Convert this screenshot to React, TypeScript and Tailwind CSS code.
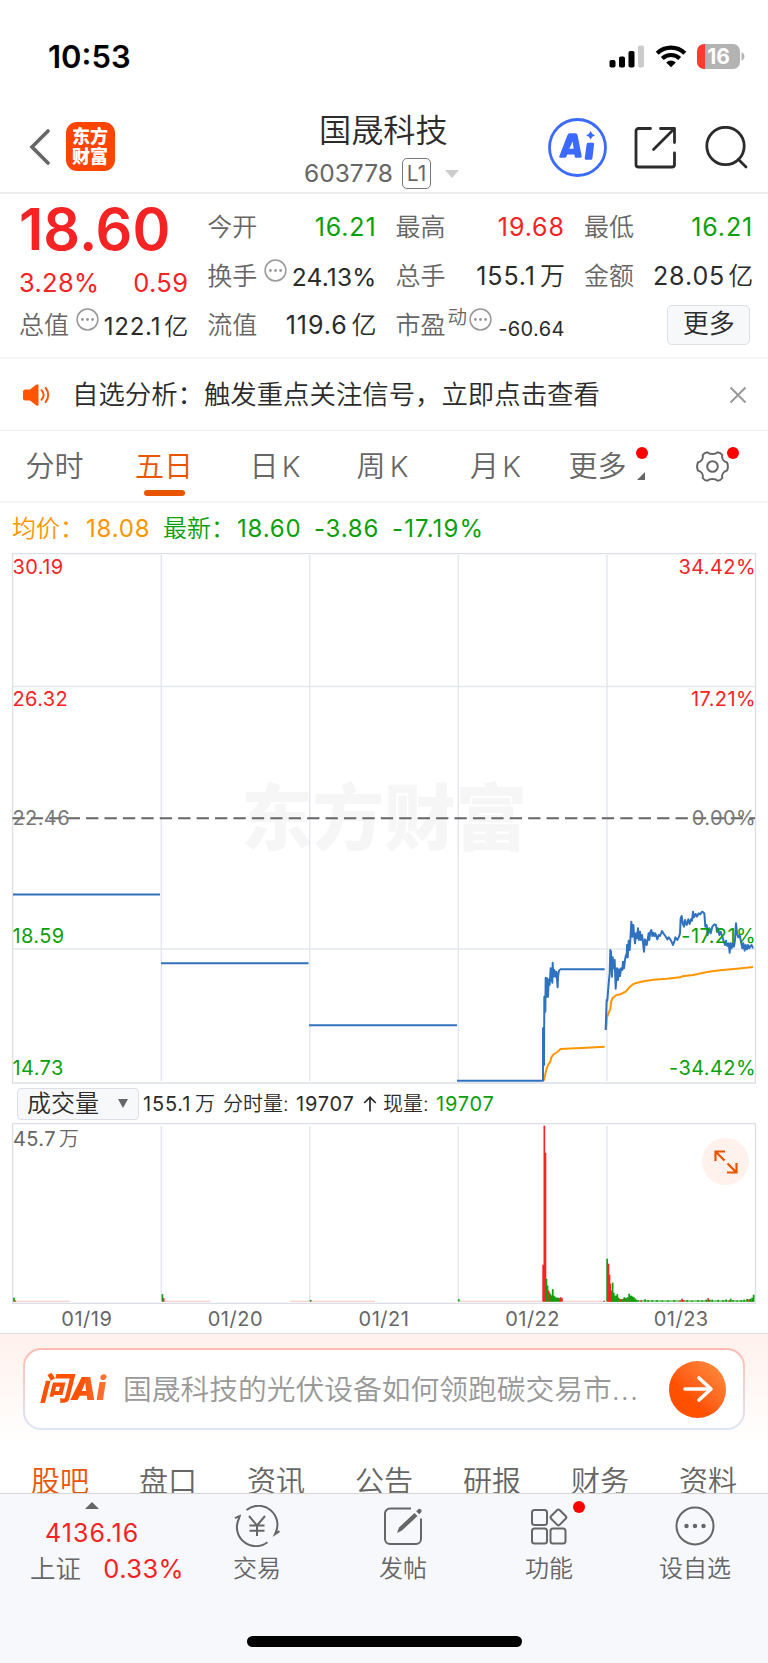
import type { ReactNode } from "react";

type Tone = "up" | "down" | "plain";

const toneClass: Record<Tone, string> = {
  up: "text-[#f52323]",
  down: "text-[#0aa00a]",
  plain: "text-[#2b2b2b]",
};

const sectionTabs = ["股吧", "盘口", "资讯", "公告", "研报", "财务", "资料"];
const dates = ["01/19", "01/20", "01/21", "01/22", "01/23"];

// points on a 3x grid whose origin is the left of the last two sessions
const priceDay4 =
  "-189,602 69,602 69,445 72,555 73,350 76,395 77,293 80,350 82,295 84,350 86,300 89,315 92,265 94,290 97,308 98,248 100,290 103,270 106,290 109,275 113,322 114,290 117,272 121,268 254,268";
const priceDay5 =
  "257,450 260,360 262,362 266,310 269,280 271,210 273,215 276,290 278,232 281,265 284,240 287,326 291,265 294,300 297,268 300,288 303,265 307,270 309,245 312,265 315,240 318,225 320,232 321,195 323,232 326,182 329,210 331,180 334,125 337,170 340,135 342,160 345,190 348,160 351,175 354,145 357,180 360,155 363,180 366,165 368,178 372,215 375,178 378,185 380,195 383,178 386,160 388,180 391,155 394,150 397,168 400,158 403,168 406,160 412,178 416,165 420,168 426,153 430,160 436,168 442,178 446,172 451,178 456,188 459,195 463,185 466,172 472,180 477,170 480,160 482,115 485,108 488,130 492,140 495,120 500,135 505,118 509,132 513,118 516,122 519,95 522,112 527,102 531,110 536,100 541,103 546,95 550,97 553,100 556,140 560,135 563,165 568,145 572,160 577,140 583,133 588,135 591,155 594,145 598,165 602,155 606,168 610,180 615,195 618,182 622,198 626,190 629,218 632,190 635,205 638,190 642,200 645,180 648,130 651,160 655,172 659,165 663,185 667,205 670,190 674,212 677,195 681,208 684,195 688,205 691,198 695,195 699,205";
const avgDay4 =
  "72,602 76,582 81,562 86,552 91,545 94,532 102,522 112,516 122,507 135,506 200,503 254,500";
const avgDay5 =
  "258,450 261,412 266,398 271,388 273,366 278,354 286,347 303,342 318,334 328,322 340,312 352,308 375,303 400,299 440,296 480,292 487,289 520,285 565,275 600,271 650,266 699,261";

// [x, height, 1 = up / 0 = down]
const volumeBars: [number, number, number][] = [
  [13.8, 4, 0], [15, 1.2, 1], [162.3, 7.5, 0], [163.5, 3.5, 1], [310.5, 1.8, 0], [458.6, 2.5, 0],
  [543, 37, 1], [544.2, 176, 1], [545.3, 149, 1], [546.3, 23, 0], [547.4, 16, 0], [548.5, 11, 1],
  [549.3, 9, 0], [550.4, 7.5, 0], [551.5, 6, 1], [552.6, 12.5, 0], [553.7, 6, 0], [554.8, 5, 0],
  [556, 4, 0], [557.1, 4, 0], [558.3, 4, 0], [559.5, 3.5, 1], [560.6, 4.5, 1], [561.8, 3.5, 1],
  [604, 1, 1], [607, 43, 0], [608.3, 38, 1], [609.3, 27, 1], [610.2, 18, 1], [611.2, 11, 1],
  [612.5, 19, 0], [613.6, 9, 0], [614.8, 6, 0], [616, 6, 0], [617.2, 7.5, 0], [618.3, 4, 0],
  [619.5, 3, 0], [620.7, 2.5, 1], [621.8, 2.5, 0], [623, 3, 0], [624.2, 4.5, 0], [625.4, 3.5, 1],
  [626.6, 4, 0], [627.8, 4.5, 1], [629, 8, 0], [630.2, 6, 0], [631.4, 6, 0], [632.6, 5, 0],
  [633.8, 4.5, 0], [635, 3, 0], [636.2, 2, 0], [638, 1.5, 0], [641, 1.5, 1], [645, 2.5, 0],
  [648, 1.5, 0], [652, 1.5, 0], [657, 1.5, 0], [662, 1.2, 0], [668, 1.2, 0], [674, 1.5, 0],
  [680, 1.2, 1], [682, 3, 1], [683.5, 1.5, 1], [687, 1.5, 0], [692, 1, 0], [698, 1.5, 0],
  [702, 1.2, 0], [706, 2, 0], [708, 3.5, 1], [709.5, 2, 0], [712, 2, 0], [718, 1.8, 0],
  [723, 1.5, 0], [726, 2.2, 0], [729, 1.2, 1], [730.5, 3, 0], [733, 1.5, 0], [737, 1.2, 0],
  [741, 1.5, 0], [744, 2, 0], [747, 2.8, 0], [749, 2.5, 1], [750.5, 3, 0], [752, 4, 0], [753.5, 7, 0],
];

const Bubble = () => (
  <svg className="size-[23px] shrink-0" viewBox="0 0 23 23" fill="none">
    <circle cx="11.5" cy="11.5" r="10.4" stroke="#999" strokeWidth="1.5" />
    <circle cx="6.4" cy="11.5" r="1.4" fill="#999" />
    <circle cx="11.5" cy="11.5" r="1.4" fill="#999" />
    <circle cx="16.6" cy="11.5" r="1.4" fill="#999" />
  </svg>
);

const Cell = ({
  label,
  tone = "plain",
  children,
}: {
  label: string;
  tone?: Tone;
  children: ReactNode;
}) => (
  <div className="flex items-center justify-between">
    <span className="text-[25px] font-[350] text-[#666]">{label}</span>
    <span className={`-mr-px flex items-center text-[25px] tracking-[0.9px] ${toneClass[tone]}`}>{children}</span>
  </div>
);

const StatusBar = () => (
  <div className="flex h-[105px] justify-between pl-[48px] pr-[23px]">
    <span className="mt-[41px] text-[31px] font-semibold text-black">10:53</span>
    <div className="mt-[43px] flex h-[26px] items-center">
      <svg className="h-[24px] w-[36px]" viewBox="0 0 36 24">
        <rect x="0.5" y="16" width="6" height="7.5" rx="1.8" />
        <rect x="10" y="12.5" width="6" height="11" rx="1.8" />
        <rect x="19.5" y="7" width="6" height="16.5" rx="1.8" />
        <rect x="29" y="1.5" width="6" height="22" rx="1.8" fill="#ccc" />
      </svg>
      <svg className="ml-[10px] h-[24px] w-[32px]" viewBox="0 0 32 24" fill="none" stroke="#000">
        <path d="M2.2 9.2a20 20 0 0 1 27.6 0" strokeWidth="4.3" />
        <path d="M7.3 14.5a12.6 12.6 0 0 1 17.4 0" strokeWidth="4.1" />
        <path d="M16 23.3l-4.8-4.9a7 7 0 0 1 9.6 0z" fill="#000" stroke="none" />
      </svg>
      <div className="ml-[10px] flex h-[25px] w-[43px] items-center justify-center overflow-hidden rounded-[7px] bg-[linear-gradient(90deg,#ff3b30_7.5px,#b3b3b3_7.5px)]">
        <span className="pt-px text-[21px] font-bold text-white">16</span>
      </div>
      <svg className="ml-px h-[9px] w-[4px]" viewBox="0 0 4 9">
        <path d="M0.5 0.3C4.4 1.6 4.4 7.4 0.5 8.7z" fill="#b3b3b3" />
      </svg>
    </div>
  </div>
);

const Header = () => (
  <header className="relative flex h-[89px] items-start justify-between border-b-2 border-[#ececec] pl-[29px] pr-[20px]">
    <div className="flex items-center pt-[17px]">
      <svg className="h-[38px] w-[22px]" viewBox="0 0 22 38" fill="none">
        <path d="M19 3L3 19l16 16" stroke="#666" strokeWidth="3.6" strokeLinecap="round" />
      </svg>
      <div className="ml-[14.5px] grid size-[49px] grid-cols-1 place-content-center rounded-[11px] bg-[#ff4400] text-center text-[18px] font-black leading-[20px] text-white">
        <span>东方</span>
        <span>财富</span>
      </div>
    </div>
    <div className="absolute left-[304px] top-[10px] flex flex-col">
      <h1 className="pl-[15px] text-[32.2px] font-[350] text-[#2b2b2b]">国晟科技</h1>
      <div className="mt-[11px] flex items-center">
        <span className="w-[98px] text-[24.5px] text-[#666]">603778</span>
        <span className="flex h-[31px] w-[29px] items-center justify-center rounded-[5px] border border-[#777] text-[21px] text-[#666]">
          L1
        </span>
        <svg className="ml-[14px] h-[8px] w-[14px]" viewBox="0 0 14 8">
          <path d="M0 0h14L7 8z" fill="#ccc" />
        </svg>
      </div>
    </div>
    <div className="flex items-center pt-[13px]">
      <svg className="size-[59px]" viewBox="0 0 59 59" fill="none">
        <circle cx="29.5" cy="29.5" r="28" stroke="#3a6aff" strokeWidth="2.8" />
        <path
          d="M11.300 38.200L19.500 17q.6-1.800 2.500-1.800h5.500q1.700 0 2 1.800L33.700 38q.3 1.800-1.500 1.800h-4q-1.300 0-1.500-1.300l-.3-2h-7.200l-.8 2q-.5 1.300-1.800 1.300h-4q-1.900 0-1.300-1.600zM21.300 30.800h4.300l-.9-7.300z"
          fill="#3a6aff"
          fillRule="evenodd"
        />
        <path
          d="M38.700 26q.2-1.300 1.500-1.300h4.600q1.500 0 1.300 1.500l-1.700 14.100q-.2 1.500-1.500 1.500h-4.800q-1.600 0-1.400-1.500zM42.600 13q1.200 3.400 4.500 4.300-3.300 1-4.500 4.300-1.200-3.300-4.500-4.300 3.300-.9 4.500-4.300z"
          fill="#3a6aff"
        />
      </svg>
      <svg className="ml-[27px] size-[43px]" viewBox="0 0 43 43" fill="none" stroke="#2b2b2b" strokeWidth="2.8" strokeLinecap="round" strokeLinejoin="round">
        <path d="M16.500 2.500H4.500a2.500 2.500 0 0 0-2.500 2.500V38.500a2.500 2.500 0 0 0 2.500 2.500H38a2.500 2.500 0 0 0 2.500-2.500V27" />
        <path d="M26.500 2.500H40.500V16.500M40 3L19.500 23.500" />
      </svg>
      <svg className="ml-[27px] size-[44px]" viewBox="0 0 44 44" fill="none" stroke="#2b2b2b" strokeWidth="2.8" strokeLinecap="round">
        <circle cx="21.500" cy="20" r="18.700" />
        <path d="M34.500 33.500l7.500 7.500" />
      </svg>
    </div>
  </header>
);

const Quote = () => (
  <section className="grid h-[165px] grid-cols-[168.300px_168.300px_168.300px_168.300px] grid-rows-[49px_49px_49px] gap-x-5 border-b-2 border-[#f6f6f6] pl-[19px] pt-[9px]">
    <div className="flex items-center pt-[4px] text-[57.500px] font-semibold text-[#f52323]">18.60</div>
    <Cell label="今开" tone="down">16.21</Cell>
    <Cell label="最高" tone="up">19.68</Cell>
    <Cell label="最低" tone="down">16.21</Cell>

    <div className="flex items-center justify-between pt-[13px] text-[25.500px] tracking-[0.3px] text-[#f52323]">
      <span>3.28%</span>
      <span className="-mr-px">0.59</span>
    </div>
    <div className="flex items-center">
      <span className="w-[57px] text-[25px] font-[350] text-[#666]">换手</span>
      <span className="mb-[12px]"><Bubble /></span>
      <span className="-mr-px ml-auto pt-[2px] text-[24.500px] tracking-[0.2px] text-[#2b2b2b]">24.13%</span>
    </div>
    <Cell label="总手">155.1<span className="ml-1 font-[350] tracking-normal">万</span></Cell>
    <Cell label="金额">28.05<span className="ml-[3px] font-[350] tracking-normal">亿</span></Cell>

    <div className="flex items-center">
      <span className="w-[57px] text-[25px] font-[350] text-[#666]">总值</span>
      <span className="mb-[12px]"><Bubble /></span>
      <span className="-mr-px ml-auto flex pt-[3px] text-[24px] tracking-[0.8px] text-[#2b2b2b]">122.1<span className="ml-[3px] font-[350] tracking-normal">亿</span></span>
    </div>
    <Cell label="流值">119.6<span className="ml-1 font-[350] tracking-normal">亿</span></Cell>
    <div className="flex items-center">
      <span className="text-[25px] font-[350] text-[#666]">市盈</span>
      <span className="mb-[15px] ml-[2px] text-[19.500px] font-[350] text-[#666]">动</span>
      <span className="mb-[12px] ml-[2px]"><Bubble /></span>
      <span className="-mr-px ml-auto pt-[6px] text-[20px] tracking-[0.400px] text-[#2b2b2b]">-60.64</span>
    </div>
    <div className="flex items-center justify-end pb-[2px] pr-[2px]">
      <button className="flex h-[40px] w-[83px] items-center justify-center rounded-[5px] border border-[#dcdfe6] bg-[#f7f8fa] pb-px text-[26px] font-[350] text-[#2b2b2b]">
        更多
      </button>
    </div>
  </section>
);

const Notice = () => (
  <section className="flex h-[72px] items-center border-b border-[#f0f0f0] pl-[22px] pr-[21px]">
    <svg className="h-[22px] w-[28px]" viewBox="0 0 28 22" fill="none">
      <path d="M1 8q0-2.500 2.500-2.500h4.500L14 .7q2.500-1.500 2.500 1v18.600q0 2.500-2.500 1l-6-4.800H3.500Q1 16.500 1 14z" fill="#ff5500" />
      <path d="M19.500 6.200a6.500 6.500 0 0 1 0 9.600M23.700 4a11 11 0 0 1 0 14" stroke="#ff5500" strokeWidth="2" strokeLinecap="round" />
    </svg>
    <p className="ml-[22px] whitespace-nowrap text-[26.400px] font-[350] text-[#2b2b2b]">
      自选分析：触发重点关注信号，立即点击查看
    </p>
    <svg className="ml-auto size-[18px]" viewBox="0 0 18 18" stroke="#999" strokeWidth="2">
      <path d="M1.500 1.500l15 15M16.500 1.500l-15 15" />
    </svg>
  </section>
);

const PeriodTabs = () => (
  <nav className="grid h-[72px] grid-cols-[109px_110px_112px_103px_123px_81px_130px] items-center border-b-2 border-[#f5f5f5] text-center text-[29px] font-[350] text-[#666]">
    <span>分时</span>
    <span className="relative text-[#ea5504]">
      五日
      <i className="absolute -bottom-[15px] left-[35px] h-[6px] w-[41px] rounded-full bg-[#ea5504]" />
    </span>
    <span>日<span className="ml-[3px]">K</span></span>
    <span>周<span className="ml-1">K</span></span>
    <span>月<span className="ml-[3px]">K</span></span>
    <span className="relative">
      更多
      <i className="absolute -top-[5px] right-[-10px] size-[12px] rounded-full bg-[#ff0000]" />
      <svg className="absolute right-[-7px] top-[20px] size-[8px]" viewBox="0 0 8 8">
        <path d="M8 0v8H0z" fill="#666" />
      </svg>
    </span>
    <span className="relative flex pl-[58px]">
      <svg className="size-[33px]" viewBox="0 0 33 33" fill="none" stroke="#666" strokeWidth="2">
        <path
          d="M11.500 2.300C13.600 4.600 19.400 4.600 21.500 2.300Q24.500 2.500 26.300 5C25.600 8.400 27.600 11.600 31 12.500Q32.800 16.500 31 20.500C27.600 21.400 25.600 24.600 26.300 28Q24.500 30.500 21.500 30.700C19.400 28.400 13.600 28.400 11.500 30.700Q8.500 30.500 6.700 28C7.400 24.600 5.400 21.400 2 20.500Q.2 16.500 2 12.500C5.400 11.600 7.400 8.400 6.700 5Q8.500 2.500 11.500 2.300z"
          strokeLinejoin="round"
        />
        <circle cx="16.500" cy="16.500" r="5.300" />
      </svg>
      <i className="absolute left-[89px] top-[-3px] size-[12px] rounded-full bg-[#ff0000]" />
    </span>
  </nav>
);

const PriceChart = () => (
  <section className="relative h-[531px] text-[20px] tracking-[0.400px]">
    <span className="absolute left-[241px] top-[230px] text-[71.500px] font-black tracking-normal text-[#f6f6f6]">东方财富</span>
    <svg className="absolute inset-0 h-[531px] w-[768px]" viewBox="0 553 768 531" fill="none">
      <path d="M161.300 555V1081M309.700 555V1081M458.300 555V1081M607 555V1081M13 686.500H755M13 949H755" stroke="#e4e7ee" strokeWidth="1.500" />
      <path d="M12.600 1083V553.500H755.500V1083z" stroke="#dcdfe6" strokeWidth="1.300" />
      <path d="M12.400 818.300H755" stroke="#666" strokeWidth="2" strokeDasharray="12.300 6.120" />
      <path d="M13 894.500H160M161 963.200H308.500M309 1025.200H457" stroke="#2f72c0" strokeWidth="2" />
      <g transform="translate(520 880) scale(0.33333)" strokeWidth="6" strokeLinejoin="round">
        <polyline points={avgDay4} stroke="#ff9500" />
        <polyline points={avgDay5} stroke="#ff9500" />
        <polyline points={priceDay4} stroke="#2f72c0" />
        <polyline points={priceDay5} stroke="#2f72c0" />
      </g>
    </svg>
    <div className="absolute left-[12.500px] top-[4px] text-[#f52323]">30.19</div>
    <div className="absolute left-[12.500px] top-[136px] text-[#f52323]">26.32</div>
    <div className="absolute left-[12.500px] top-[255px] text-[#777]">22.46</div>
    <div className="absolute left-[12.500px] top-[373px] text-[#0aa00a]">18.59</div>
    <div className="absolute left-[12.500px] top-[505px] text-[#0aa00a]">14.73</div>
    <div className="absolute right-[12px] top-[4px] text-[#f52323]">34.42%</div>
    <div className="absolute right-[12px] top-[136px] text-[#f52323]">17.21%</div>
    <div className="absolute right-[12px] top-[255px] text-[#777]">0.00%</div>
    <div className="absolute right-[12px] top-[373px] text-[#0aa00a]">-17.21%</div>
    <div className="absolute right-[12px] top-[505px] text-[#0aa00a]">-34.42%</div>
  </section>
);

const VolumeChart = () => (
  <>
    <div className="flex h-[39px] items-center pl-[17px] text-[20px] text-[#2b2b2b]">
      <button className="flex h-[32px] w-[122px] items-center justify-between rounded-[4px] border border-[#dcdfe6] bg-[#f7f8fa] pl-[9px] pr-[10px] text-[24px] font-[350]">
        成交量
        <svg className="h-[9px] w-[10px]" viewBox="0 0 10 9">
          <path d="M0 0h10L5 9z" fill="#666" />
        </svg>
      </button>
      <span className="ml-[4px] w-[80px] tracking-[0.800px]">155.1<span className="ml-[4px] font-[350]">万</span></span>
      <span className="w-[73px] font-[350]">分时量:</span>
      <span className="w-[67px] tracking-[0.800px]">19707</span>
      <svg className="h-[16px] w-[14px]" viewBox="0 0 14 16" fill="none" stroke="#2b2b2b" strokeWidth="1.700">
        <path d="M7 15.500V1.500M1.200 7L7 1.300 12.800 7" />
      </svg>
      <span className="ml-[6px] w-[53px] font-[350]">现量:</span>
      <span className="tracking-[0.800px] text-[#0aa00a]">19707</span>
    </div>
    <section className="relative h-[181px]">
      <svg className="h-[181px] w-[768px]" viewBox="0 1123 768 181" fill="none">
        <path d="M161.300 1126V1301M309.700 1126V1301M458.300 1126V1301M607 1126V1301" stroke="#e4e7ee" strokeWidth="1.500" />
        <path d="M12.600 1303.300V1123.600H755.500V1303.300z" stroke="#dcdfe6" strokeWidth="1.300" />
        <path d="M15 1301.300H70M164 1301.300H210M290 1301.300H375M460 1301.300H542M563 1301.300H606" stroke="#f52323" strokeOpacity="0.35" strokeWidth="0.800" />
        <path d="M610 1301H754" stroke="#0aa00a" strokeWidth="1" />
        {volumeBars.map(([x, h, up]) => (
          <rect key={x} x={x - 0.700} y={1301.700 - h} width="1.700" height={h} fill={up ? "#f52323" : "#0aa00a"} />
        ))}
      </svg>
      <span className="absolute left-[13px] top-[6px] text-[20px] tracking-[0.400px] text-[#666]">
        45.7<span className="ml-[3px] font-[350]">万</span>
      </span>
      <div className="absolute left-[702px] top-[15px] flex size-[47px] items-center justify-center rounded-full bg-[#fff1eb]">
        <svg className="size-[24px]" viewBox="0 0 24 24" fill="none" stroke="#ea5504" strokeWidth="2.200">
          <path d="M1.500 11V1.500H11M2 2l8.500 8.500M22.500 13v9.500H13M22 22l-8.500-8.500" />
        </svg>
      </div>
    </section>
    <div className="grid h-[30px] grid-cols-5 items-center border-b border-[#dcdfe6] px-[12.500px] pt-px text-center text-[20px] tracking-[0.500px] text-[#666]">
      {dates.map((date) => (
        <span key={date}>{date}</span>
      ))}
    </div>
  </>
);

const AskBar = () => (
  <section className="h-[112px] bg-linear-to-b from-[#fff1ec] to-white px-[23px] pt-[14px]">
    <div className="h-[82px] rounded-[18px] bg-linear-to-b from-[#ffbcb2] to-[#dde6f8] p-[2px]">
      <div className="flex h-full items-center rounded-[16px] bg-white pl-[14px] pr-[17px]">
        <span className="w-[84px] bg-linear-to-r from-[#ff5000] from-50% to-[#ff8a4a] bg-clip-text text-[32px] font-black italic text-transparent">
          问Ai
        </span>
        <span className="whitespace-nowrap pt-[3px] text-[28.750px] font-[350] text-[#999]">国晟科技的光伏设备如何领跑碳交易市<span className="tracking-[1px]">...</span></span>
        <span className="ml-auto flex size-[57px] items-center justify-center rounded-full bg-linear-to-tr from-[#ff5000] from-35% to-[#ff9040]">
          <svg className="h-[26px] w-[30px]" viewBox="0 0 30 26" fill="none" stroke="#fff" strokeWidth="3.600" strokeLinecap="round" strokeLinejoin="round">
            <path d="M2 13h26M16 2l12 11-12 11" />
          </svg>
        </span>
      </div>
    </div>
  </section>
);

const NavItem = ({ label, children }: { label: string; children: ReactNode }) => (
  <div className="flex w-[146px] flex-col items-center pt-[11px]">
    <div className="flex h-[42px] items-center">{children}</div>
    <span className="mt-[10px] text-[24px] font-[350] text-[#666]">{label}</span>
  </div>
);

const BottomBar = () => (
  <footer className="relative flex h-[170px] border-t border-[#d5d5d8] bg-[#f7f8fb]">
    <div className="w-[184px]">
      <svg className="ml-[85px] mt-[8px] h-[7px] w-[14px]" viewBox="0 0 14 7">
        <path d="M7 0l7 7H0z" fill="#666" />
      </svg>
      <div className="ml-[45px] mt-[12px] text-[25px] tracking-[1.100px] text-[#f52323]">4136.16</div>
      <div className="ml-[30px] mt-[10px] flex text-[25.500px] text-[#f52323]">
        <span className="w-[74px] font-[350] text-[#666]">上证</span>
        <span className="tracking-[0.400px]">0.33%</span>
      </div>
    </div>
    <NavItem label="交易">
      <svg className="h-[42px] w-[46px]" viewBox="0 0 46 42" fill="none" stroke="#666" strokeWidth="2">
        <path d="M12.500 5a19 19 0 0 1 29.300 22.500l-.8 1.700 4.500-3M33.500 37.200A19 19 0 0 1 5 13.500l.7-2.500-4.700 2.200" />
        <path d="M15 11l8 9.500 8-9.500M23 20.500V31M15.500 20.500h15M15.500 25.700h15" />
      </svg>
    </NavItem>
    <NavItem label="发帖">
      <svg className="size-[40px]" viewBox="0 0 40 40" fill="none" stroke="#666" strokeWidth="2">
        <path d="M28 2.500H7a5 5 0 0 0-5 5V33a5 5 0 0 0 5 5H33a5 5 0 0 0 5-5V12.500" />
        <path d="M14 27l2-5.500L31.500 7l3 3L19 24.500zM33.200 5.300l2-2q1.500-1 2.700.2t.3 2.700l-2 2z" fill="#666" stroke="none" />
      </svg>
    </NavItem>
    <NavItem label="功能">
      <span className="relative flex">
        <svg className="size-[38px]" viewBox="0 0 38 38" fill="none" stroke="#666" strokeWidth="2">
          <rect x="2" y="3" width="15" height="15" rx="2.500" />
          <rect x="2" y="21.500" width="15" height="15" rx="2.500" />
          <rect x="20.500" y="21.500" width="15" height="15" rx="2.500" />
          <rect x="22.300" y="4.300" width="12.200" height="12.200" rx="2" transform="rotate(45 28.400 10.400)" />
        </svg>
        <i className="absolute -right-[17px] -top-[6px] size-[12px] rounded-full bg-[#ff0000]" />
      </span>
    </NavItem>
    <NavItem label="设自选">
      <svg className="size-[40px]" viewBox="0 0 40 40" fill="none">
        <circle cx="20" cy="20" r="18.500" stroke="#666" strokeWidth="2" />
        <circle cx="11.500" cy="20" r="2.200" fill="#666" />
        <circle cx="20" cy="20" r="2.200" fill="#666" />
        <circle cx="28.500" cy="20" r="2.200" fill="#666" />
      </svg>
    </NavItem>
    <div className="absolute left-[247px] top-[142px] h-[11px] w-[275px] rounded-full bg-black" />
  </footer>
);

const App = () => (
  <div className="h-[1663px] w-[768px] overflow-hidden bg-white font-['Inter','Noto_Sans_CJK_SC',sans-serif] leading-none">
    <StatusBar />
    <Header />
    <Quote />
    <Notice />
    <PeriodTabs />
    <div className="flex h-[50px] items-center whitespace-pre pl-[12px] pt-px text-[24px] tracking-[0.800px]">
      <span className="w-[74px] font-[350] tracking-normal text-[#ff9500]">均价：</span>
      <span className="w-[77px] text-[#ff9500]">18.08</span>
      <span className="w-[74px] font-[350] tracking-normal text-[#0aa00a]">最新：</span>
      <span className="w-[77px] text-[#0aa00a]">18.60</span>
      <span className="w-[78px] text-[#0aa00a]">-3.86</span>
      <span className="tracking-[1.100px] text-[#0aa00a]">-17.19%</span>
    </div>
    <PriceChart />
    <VolumeChart />
    <AskBar />
    <nav className="flex h-[47px] gap-[50px] overflow-hidden pl-[31px] pt-[21px] text-[29px] font-[350] text-[#666]">
      {sectionTabs.map((tab, i) => (
        <span key={tab} className={`w-[58px] shrink-0 ${i === 0 ? "text-[#ea5504]" : ""}`}>
          {tab}
        </span>
      ))}
    </nav>
    <BottomBar />
  </div>
);

export default App;
